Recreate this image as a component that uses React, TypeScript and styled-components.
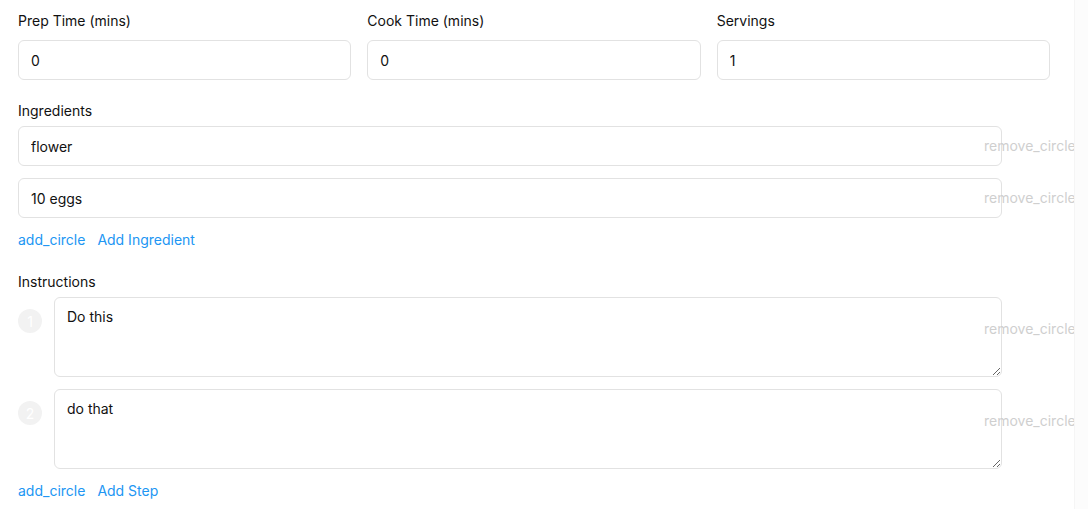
import React from "react";
import styled, { createGlobalStyle } from "styled-components";

const ingredients = ["flower", "10 eggs"];
const steps = ["Do this", "do that"];

const App = () => {
  return (
    <Shell>
      <GlobalStyle />
      <Page>
        <FieldRow>
          <Field>
            <Label>Prep Time (mins)</Label>
            <Input defaultValue="0" />
          </Field>
          <Field>
            <Label>Cook Time (mins)</Label>
            <Input defaultValue="0" />
          </Field>
          <Field>
            <Label>Servings</Label>
            <Input defaultValue="1" />
          </Field>
        </FieldRow>

        <Section>
          <Label $tight>Ingredients</Label>
          <List>
            {ingredients.map((item) => (
              <ItemRow key={item}>
                <Input defaultValue={item} />
                <RemoveButton>remove_circle</RemoveButton>
              </ItemRow>
            ))}
          </List>
          <AddButton>
            <span>add_circle</span>
            <span>Add Ingredient</span>
          </AddButton>
        </Section>

        <Section $gap="22px">
          <Label $tight>Instructions</Label>
          <List>
            {steps.map((step, i) => (
              <ItemRow key={step} $top>
                <StepNumber>{i + 1}</StepNumber>
                <TextArea defaultValue={step} />
                <RemoveButton $top>remove_circle</RemoveButton>
              </ItemRow>
            ))}
          </List>
          <AddButton>
            <span>add_circle</span>
            <span>Add Step</span>
          </AddButton>
        </Section>
      </Page>
      <Gutter />
    </Shell>
  );
};

/* CSS */
const GlobalStyle = createGlobalStyle`
  html, body {
    margin: 0;
    padding: 0;
    background: #ffffff;
  }
  body {
    font-family: Inter, "Liberation Sans", sans-serif;
    font-size: 14px;
    color: #111111;
  }
`;

const Shell = styled.div`
  display: flex;
  width: 1088px;
  height: 509px;
  overflow: hidden;
`;

const Page = styled.div`
  width: 1074px;
  flex: none;
  box-sizing: border-box;
  padding: 11px 24px 0 18px;
  overflow: hidden;
`;

const Gutter = styled.div`
  flex: 1;
  background: #fcfcfc;
  border-left: 1px solid #f5f5f5;
`;

const FieldRow = styled.div`
  display: grid;
  grid-template-columns: repeat(3, 1fr);
  gap: 16px;
`;

const Field = styled.div`
  display: flex;
  flex-direction: column;
`;

const Label = styled.div<{ $tight?: boolean }>`
  font-size: 14px;
  line-height: 20px;
  font-weight: 400;
  color: #111111;
  margin-bottom: ${(p) => (p.$tight ? "5px" : "9px")};
`;

const Input = styled.input`
  box-sizing: border-box;
  min-width: 0;
  width: 100%;
  height: 40px;
  flex: none;
  padding: 0 12px;
  border: 1px solid #e2e2e2;
  border-radius: 6px;
  font: inherit;
  font-size: 14px;
  color: #111111;
  background: #fff;
  outline: none;
`;

const Section = styled.div<{ $gap?: string }>`
  margin-top: ${(p) => p.$gap ?? "21px"};
`;

const List = styled.div`
  display: flex;
  flex-direction: column;
  gap: 12px;
  width: calc(100% - 48px);
`;

const ItemRow = styled.div<{ $top?: boolean }>`
  display: flex;
  align-items: ${(p) => (p.$top ? "flex-start" : "center")};
`;

const RemoveButton = styled.span<{ $top?: boolean }>`
  flex: none;
  width: 0;
  transform: translateX(-18px);
  margin-top: ${(p) => (p.$top ? "22px" : "0")};
  white-space: nowrap;
  font-size: 14px;
  line-height: 20px;
  color: #cfcfcf;
  position: relative;
  z-index: 1;
`;

const StepNumber = styled.div`
  flex: none;
  width: 24px;
  height: 24px;
  margin: 12px 12px 0 0;
  border-radius: 50%;
  background: #f2f2f2;
  color: #ffffff;
  font-size: 14px;
  display: flex;
  align-items: center;
  justify-content: center;
`;

const TextArea = styled.textarea`
  box-sizing: border-box;
  flex: 1;
  min-width: 0;
  height: 80px;
  padding: 9px 12px;
  border: 1px solid #e2e2e2;
  border-radius: 6px;
  font: inherit;
  font-size: 14px;
  line-height: 20px;
  color: #111111;
  background: #fff;
  outline: none;
`;

const AddButton = styled.div`
  display: flex;
  gap: 12px;
  margin-top: 12px;
  font-size: 14px;
  line-height: 20px;
  color: #2196f3;
`;

export default App;
